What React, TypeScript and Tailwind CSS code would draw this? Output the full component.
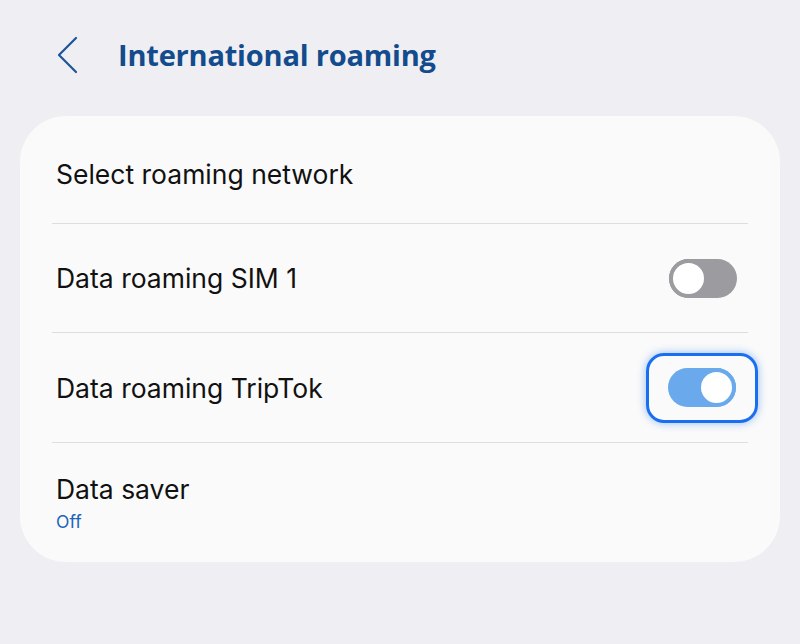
import React, { useState } from 'react';

const font = { fontFamily: '"Open Sans", Roboto, sans-serif' };
const bodyFont = { fontFamily: 'Inter, "Open Sans", sans-serif' };

const Toggle: React.FC<{ on: boolean; focused?: boolean; onClick: () => void }> = ({ on, focused, onClick }) => {
  const track = on ? 'bg-[#6aa9ec]' : 'bg-[#9c9ca0]';
  const knob = on ? 'border-[#6aa9ec]' : 'border-[#9c9ca0]';
  const sw = (
    <button
      onClick={onClick}
      className={`w-[68px] h-[39px] rounded-full flex items-center px-0 ${track} ${on ? 'justify-end' : 'justify-start'}`}
    >
      <span className={`w-[39px] h-[39px] rounded-full bg-white border-[4px] ${knob}`} />
    </button>
  );
  if (!focused) return sw;
  return (
    <div className="w-[112px] h-[70px] rounded-[18px] border-[3px] border-[#1a6ff0] shadow-[0_0_8px_rgba(26,111,240,0.45)] flex items-center justify-center">
      {sw}
    </div>
  );
};

const App: React.FC = () => {
  const [sim1, setSim1] = useState(false);
  const [tripTok, setTripTok] = useState(true);

  return (
    <div className="min-h-screen w-full bg-[#efeff3] px-5 pt-[34px] pb-10" style={font}>
      <div className="flex items-center h-[42px] mb-[40px]">
        <svg width="24" height="40" viewBox="0 0 24 40" className="ml-[36px]">
          <path d="M20 3 L3 20 L20 37" fill="none" stroke="#1c5497" strokeWidth="2.2" strokeLinecap="round" strokeLinejoin="round" />
        </svg>
        <h1 className="ml-[38px] text-[29px] font-bold tracking-[-0.2px] text-[#134b8c]">International roaming</h1>
      </div>

      <div className="bg-[#fafafa] rounded-[46px] px-8" style={bodyFont}>
        <div className="h-[108px] flex items-center border-b border-[#dedede] text-[26.5px] text-[#111]">
          <span className="pt-[10px] pl-[4px]">Select roaming network</span>
        </div>
        <div className="h-[109px] flex items-center justify-between border-b border-[#dedede] text-[26.5px] text-[#111]">
          <span className="pl-[4px] pt-[2px]">Data roaming SIM 1</span>
          <div className="mr-[11px]">
            <Toggle on={sim1} onClick={() => setSim1(!sim1)} />
          </div>
        </div>
        <div className="h-[110px] flex items-center justify-between border-b border-[#dedede] text-[26.5px] text-[#111]">
          <span className="pl-[4px] pt-[2px]">Data roaming TripTok</span>
          <div className="-mr-[10px]">
            <Toggle on={tripTok} focused onClick={() => setTripTok(!tripTok)} />
          </div>
        </div>
        <div className="h-[119px] flex flex-col pt-[29px] pl-[4px]">
          <span className="text-[26.5px] text-[#111] leading-[34px]">Data saver</span>
          <span className="text-[17.5px] text-[#1b64b7] leading-[24px] mt-[4px]">Off</span>
        </div>
      </div>
    </div>
  );
};

export default App;
